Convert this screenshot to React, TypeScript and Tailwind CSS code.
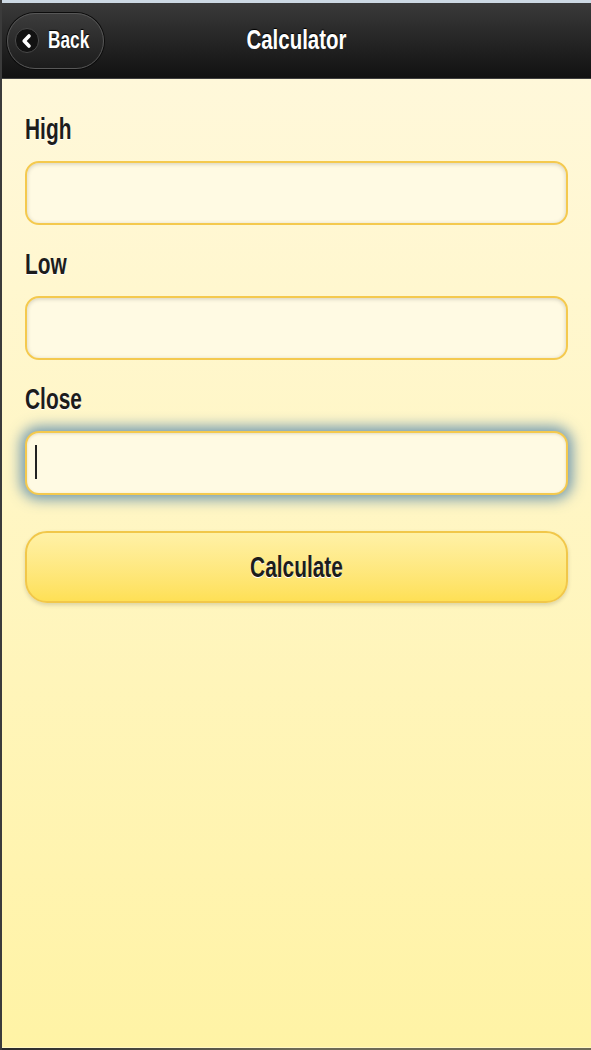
import React from "react";

const font = "font-['Liberation_Sans','Arial',sans-serif]";

function Field({ label, focused }: { label: string; focused?: boolean }) {
  return (
    <div className="flex flex-col">
      <label className="h-[29px] leading-[29px] text-[29px] font-bold text-[#1c1c1c] [text-shadow:0_1px_0_#fff] whitespace-nowrap">
        <span className="inline-block origin-left scale-x-[0.72]">{label}</span>
      </label>
      <div className="relative mt-[17px]">
        <input
          type="text"
          className={
            "block w-full h-[64px] rounded-[14px] border-2 border-[#f4c94e] bg-[#fffae3] outline-none caret-transparent px-3 text-[22px] " +
            (focused
              ? "shadow-[0_0_14px_4px_rgba(70,125,170,0.8),inset_0_1px_3px_rgba(0,0,0,0.12)]"
              : "shadow-[inset_0_1px_4px_rgba(0,0,0,0.18)]")
          }
        />
        {focused && (
          <span className="absolute left-[10px] top-[14px] h-[34px] w-[2px] bg-[#222]" />
        )}
      </div>
    </div>
  );
}

export default function App() {
  return (
    <div
      className={
        "w-[591px] h-[1050px] flex flex-col border-l-2 border-[#3b3b3b] overflow-hidden " +
        font
      }
    >
      <div className="h-[3px] bg-[#cdd9e4]" />
      <header className="h-[76px] grid grid-cols-[1fr_auto_1fr] items-center bg-gradient-to-b from-[#3a3a3a] to-[#121212] border-b border-[#3f3f3f]">
        <div className="pl-[5px] flex items-center">
          <button className="h-[56px] w-[97px] rounded-full border border-[#575757] shadow-[0_0_0_1px_#0c0c0c] bg-gradient-to-b from-[#3c3c3c] to-[#1c1c1c] flex items-center pl-[7px] gap-[9px]">
            <span className="w-[25px] h-[25px] rounded-full bg-[#121212] border border-[#4a4a4a] flex items-center justify-center">
              <svg width="16" height="16" viewBox="0 0 16 16">
                <path
                  d="M10 3 L5.2 8 L10 13"
                  fill="none"
                  stroke="#fff"
                  strokeWidth="3.6"
                  strokeLinecap="round"
                  strokeLinejoin="round"
                />
              </svg>
            </span>
            <span className="text-[23px] font-bold text-white leading-none [text-shadow:0_-1px_1px_#000] whitespace-nowrap inline-block origin-left scale-x-[0.75]">
              Back
            </span>
          </button>
        </div>
        <h1 className="text-[28px] font-bold text-white [text-shadow:0_-1px_1px_#000] whitespace-nowrap inline-block scale-x-[0.73] leading-none -mt-[2px]">
          Calculator
        </h1>
        <div />
      </header>
      <main className="flex-1 bg-gradient-to-b from-[#fff8da] to-[#fff3a5] px-[23px] pt-[36px] flex flex-col">
        <div className="flex flex-col gap-[25px]">
          <Field label="High" />
          <Field label="Low" />
          <Field label="Close" focused />
        </div>
        <button className="mt-[36px] h-[72px] w-full rounded-[22px] border-2 border-[#f1c74a] bg-gradient-to-b from-[#fff1a6] to-[#fee055] shadow-[0_2px_4px_rgba(0,0,0,0.15)] flex items-center justify-center">
          <span className="text-[29px] font-bold text-[#1c1c1c] [text-shadow:0_1px_0_#fff] inline-block scale-x-[0.72] whitespace-nowrap leading-none">
            Calculate
          </span>
        </button>
      </main>
      <div className="h-[1px] bg-[#fff7c4]" />
      <div className="h-[2px] bg-gradient-to-r from-[#2a2a2a] via-[#6d6a55] to-[#6d6a55]" />
    </div>
  );
}
